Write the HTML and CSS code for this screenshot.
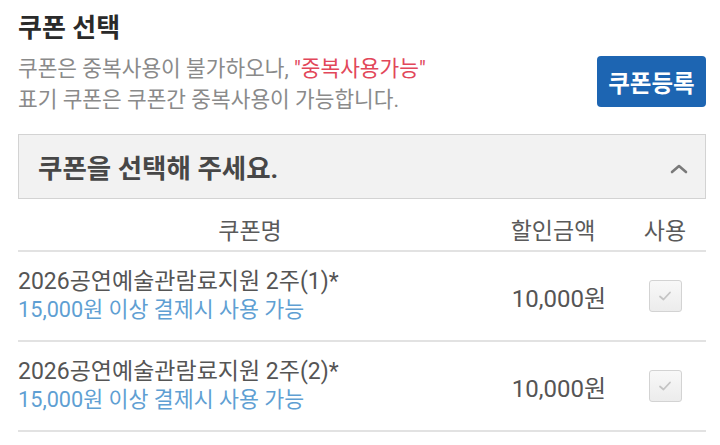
FILE: index.html
```html
<!DOCTYPE html>
<html lang="ko">
<head>
    <meta charset="UTF-8">
    <meta name="viewport" content="width=device-width, initial-scale=1.0">
    <title>쿠폰 선택</title>
    <link rel="stylesheet" href="styles.css">
</head>
<body>
    <div class="page">
        <h1 class="page-title">쿠폰 선택</h1>

        <!-- 안내 문구 + 등록 버튼 -->
        <div class="notice">
            <p class="notice-text">
                쿠폰은 중복사용이 불가하오나, <span class="accent">"중복사용가능"</span><br>
                표기 쿠폰은 쿠폰간 중복사용이 가능합니다.
            </p>
            <button class="btn-register">쿠폰등록</button>
        </div>

        <!-- 쿠폰 선택 박스 -->
        <div class="select-box">
            <span class="select-label">쿠폰을 선택해 주세요.</span>
            <svg class="chevron" width="18" height="10" viewBox="0 0 18 10">
                <path d="M2 8 L9 2 L16 8" fill="none" stroke="#7a7a7a" stroke-width="2.6" stroke-linecap="round" stroke-linejoin="round"/>
            </svg>
        </div>

        <!-- 쿠폰 목록 -->
        <div class="coupon-table">
            <div class="row head">
                <div class="col-name">쿠폰명</div>
                <div class="col-amount">할인금액</div>
                <div class="col-use">사용</div>
            </div>
            <div class="row item">
                <div class="col-name">
                    <div class="coupon-title">2026공연예술관람료지원 2주(1)*</div>
                    <div class="coupon-cond">15,000원 이상 결제시 사용 가능</div>
                </div>
                <div class="col-amount">10,000원</div>
                <div class="col-use"><span class="check"><svg width="16" height="14" viewBox="0 0 16 14"><path d="M3 7.5 L6.5 10.5 L13 3.5" fill="none" stroke="#c4c4c4" stroke-width="1.8" stroke-linecap="round" stroke-linejoin="round"/></svg></span></div>
            </div>
            <div class="row item">
                <div class="col-name">
                    <div class="coupon-title">2026공연예술관람료지원 2주(2)*</div>
                    <div class="coupon-cond">15,000원 이상 결제시 사용 가능</div>
                </div>
                <div class="col-amount">10,000원</div>
                <div class="col-use"><span class="check"><svg width="16" height="14" viewBox="0 0 16 14"><path d="M3 7.5 L6.5 10.5 L13 3.5" fill="none" stroke="#c4c4c4" stroke-width="1.8" stroke-linecap="round" stroke-linejoin="round"/></svg></span></div>
            </div>
        </div>
    </div>
</body>
</html>
```

FILE: styles.css
```css
body {
    margin: 0;
    padding: 0;
    background-color: #fff;
    color: #444;
    font-family: Roboto, "Noto Sans CJK KR", sans-serif;
}
.page {
    padding: 10px 14px 0 18px;
}
.page-title {
    margin: 0;
    font-size: 26px;
    line-height: 36px;
    font-weight: bold;
    color: #2a2a2a;
}
.notice {
    display: flex;
    justify-content: space-between;
    align-items: flex-start;
    margin-top: 7px;
}
.notice-text {
    margin: 0;
    font-size: 21.4px;
    line-height: 31px;
    color: #8a8a8a;
}
.accent {
    color: #e2475a;
}
.btn-register {
    margin-top: 3px;
    width: 109px;
    height: 51px;
    padding: 0;
    background-color: #1d65b2;
    color: #fff;
    border: none;
    border-radius: 4px;
    font-family: inherit;
    font-size: 23.5px;
    font-weight: bold;
}
.select-box {
    display: flex;
    justify-content: space-between;
    align-items: center;
    margin-top: 19px;
    height: 63px;
    padding: 0 17px 0 19px;
    background-color: #f2f2f2;
    border: 1px solid #d3d3d3;
}
.select-label {
    font-size: 26.5px;
    font-weight: bold;
    color: #474747;
}
.chevron {
    margin-top: 5px;
}
.coupon-table {
    margin-top: 8px;
}
.row {
    display: grid;
    grid-template-columns: 464px 142px 82px;
    align-items: center;
    border-bottom: 2px solid #e2e2e2;
}
.row.head {
    height: 43px;
    font-size: 23px;
    color: #5a5a5a;
    text-align: center;
}
.row.item {
    padding: 16px 0;
}
.coupon-title {
    font-size: 23px;
    line-height: 28px;
    color: #555;
}
.coupon-cond {
    font-size: 21.7px;
    line-height: 28px;
    color: #5f9fd3;
}
.item .col-amount {
    text-align: right;
    padding-right: 18px;
    font-size: 24px;
    color: #555;
}
.col-use {
    display: flex;
    justify-content: center;
}
.check {
    display: flex;
    align-items: center;
    justify-content: center;
    width: 31px;
    height: 30px;
    border: 1px solid #d3d3d3;
    border-radius: 3px;
    background: linear-gradient(#f8f8f8, #ececec);
}
```
